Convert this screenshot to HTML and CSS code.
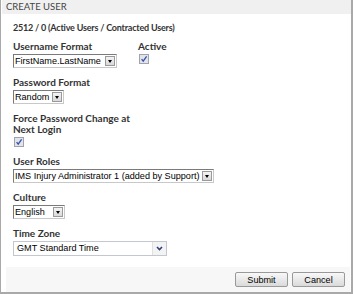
FILE: index.html
```html
<!DOCTYPE html>
<html lang="en">
<head>
  <meta charset="UTF-8" />
  <title>Create User</title>
  <link rel="stylesheet" href="styles.css">
</head>
<body>
  <div class="panel">
    <div class="panel-header">CREATE USER</div>

    <div class="panel-body">
      <div class="stats">2512 / 0 (Active Users / Contracted Users)</div>

      <div class="row">
        <div class="field field-username">
          <label class="field-label">Username Format</label>
          <div class="select select-username">
            <span class="select-value">FirstName.LastName</span>
            <span class="select-btn"><span class="tri"></span></span>
          </div>
        </div>
        <div class="field">
          <label class="field-label">Active</label>
          <span class="checkbox">
            <svg width="10" height="10" viewBox="0 0 10 10">
              <rect x="0.5" y="0.5" width="9" height="9" fill="#e2e4ea" stroke="#9ea3ad" />
              <path d="M2.6 5.2 L4.2 7.2 L7.6 2.4" fill="none" stroke="#3b4fa8" stroke-width="1.3" />
            </svg>
          </span>
        </div>
      </div>

      <div class="field">
        <label class="field-label">Password Format</label>
        <div class="select select-random">
          <span class="select-value">Random</span>
          <span class="select-btn"><span class="tri"></span></span>
        </div>
      </div>

      <div class="field">
        <label class="field-label">Force Password Change at<br>Next Login</label>
        <span class="checkbox">
          <svg width="10" height="10" viewBox="0 0 10 10">
            <rect x="0.5" y="0.5" width="9" height="9" fill="#e2e4ea" stroke="#9ea3ad" />
            <path d="M2.6 5.2 L4.2 7.2 L7.6 2.4" fill="none" stroke="#3b4fa8" stroke-width="1.3" />
          </svg>
        </span>
      </div>

      <div class="field">
        <label class="field-label">User Roles</label>
        <div class="select select-roles">
          <span class="select-value">IMS Injury Administrator 1 (added by Support)</span>
          <span class="select-btn"><span class="tri"></span></span>
        </div>
      </div>

      <div class="field">
        <label class="field-label">Culture</label>
        <div class="select select-culture">
          <span class="select-value">English</span>
          <span class="select-btn"><span class="tri"></span></span>
        </div>
      </div>

      <div class="field">
        <label class="field-label">Time Zone</label>
        <div class="tz-select">
          <span class="tz-value">GMT Standard Time</span>
          <span class="tz-btn">
            <svg width="7" height="5" viewBox="0 0 7 5">
              <path d="M1 1 L3.5 3.5 L6 1" fill="none" stroke="#2c3f7a" stroke-width="1.6" />
            </svg>
          </span>
        </div>
      </div>
    </div>

    <div class="panel-footer">
      <button type="submit" class="btn">Submit</button>
      <button type="button" class="btn">Cancel</button>
    </div>
  </div>
</body>
</html>
```

FILE: styles.css
```css
body {
  margin: 0;
  background-color: #ffffff;
  font-family: Lato, "Liberation Sans", sans-serif;
  color: #333;
}

.panel {
  width: 350px;
  height: 292px;
  border-left: 1px solid #a9a9a9;
  border-right: 2px solid #a9a9a9;
  border-bottom: 2px solid #a9a9a9;
  display: flex;
  flex-direction: column;
}

.panel-header {
  height: 14px;
  line-height: 14px;
  padding-left: 4px;
  margin-left: 1px;
  background-color: #f0f0f0;
  font-size: 9.5px;
  color: #444;
}

.panel-body {
  flex: 1;
  padding: 8px 0 0 12px;
}

.stats {
  font-size: 9px;
  font-weight: bold;
  letter-spacing: -0.2px;
  line-height: 11px;
  color: #333;
  margin-bottom: 8px;
}

.row {
  display: flex;
}

.field-username {
  width: 125px;
}

.field {
  margin-bottom: 9px;
}

.field-label {
  display: block;
  font-size: 10px;
  font-weight: bold;
  line-height: 11px;
  color: #333;
  margin-bottom: 2px;
}

/* classic dropdowns */
.select {
  display: flex;
  align-items: center;
  height: 12px;
  border: 1px solid #7a7a7a;
  border-right-color: #c8c8c8;
  border-bottom-color: #c8c8c8;
  background-color: #fff;
  font-family: "Liberation Sans", Arial, sans-serif;
  font-size: 9.1px;
  color: #000;
}

.select-value {
  flex: 1;
  padding-left: 1px;
  white-space: nowrap;
}

.select-btn {
  flex-shrink: 0;
  width: 10px;
  height: 10px;
  margin-right: 1px;
  border: 1px solid #9a9a9a;
  box-sizing: border-box;
  background: linear-gradient(#f4f4f4, #d8d8d8);
  display: flex;
  align-items: center;
  justify-content: center;
}

.tri {
  width: 0;
  height: 0;
  border-left: 2.5px solid transparent;
  border-right: 2.5px solid transparent;
  border-top: 3px solid #000;
}

.select-username { width: 102px; }
.select-random { width: 49px; }
.select-roles { width: 199px; }
.select-culture { width: 50px; }

.checkbox {
  display: block;
  width: 10px;
  height: 10px;
  margin: 2px 0 0 1px;
}

.checkbox svg {
  display: block;
}

/* modern dropdown */
.tz-select {
  display: flex;
  width: 152px;
  height: 13px;
  border: 1px solid #c3c8d0;
  background-color: #fff;
  font-family: "Liberation Sans", Arial, sans-serif;
  font-size: 9.1px;
  color: #000;
}

.tz-value {
  flex: 1;
  line-height: 13px;
  padding-left: 3px;
}

.tz-btn {
  width: 13px;
  border-left: 1px solid #dde0e4;
  background-color: #f3f3f3;
  display: flex;
  align-items: center;
  justify-content: center;
}

.tz-btn svg {
  display: block;
}

.panel-footer {
  height: 25px;
  margin-left: 5px;
  margin-right: 1px;
  background-color: #f7f7f7;
  display: flex;
  justify-content: flex-end;
  align-items: center;
  gap: 4px;
  padding-right: 5px;
}

.btn {
  width: 53px;
  height: 15px;
  padding: 0;
  border: 1px solid #999;
  border-radius: 2px;
  background: linear-gradient(#f8f8f8, #dadada);
  font-family: "Liberation Sans", Arial, sans-serif;
  font-size: 9.1px;
  color: #000;
  cursor: pointer;
}
```
